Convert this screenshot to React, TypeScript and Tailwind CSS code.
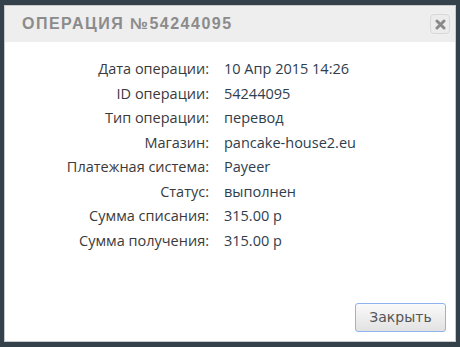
const rows: [string, string][] = [
  ["Дата операции:", "10 Апр 2015 14:26"],
  ["ID операции:", "54244095"],
  ["Тип операции:", "перевод"],
  ["Магазин:", "pancake-house2.eu"],
  ["Платежная система:", "Payeer"],
  ["Статус:", "выполнен"],
  ["Сумма списания:", "315.00 р"],
  ["Сумма получения:", "315.00 р"],
];

export default function App() {
  return (
    <div className="w-[460px] h-[347px] bg-[#34414a] pt-[5px] pl-[4px]">
      <div className="w-[452px] h-[337px] bg-white border border-[#c9c9c9] flex flex-col">
        <div className="h-[36px] bg-[#eeeeee] flex items-center justify-between pl-[17px] pr-[5px]">
          <h2 className="font-['Liberation_Sans',sans-serif] font-bold text-[16px] tracking-[1.5px] text-[#8b8b8b]">
            ОПЕРАЦИЯ №54244095
          </h2>
          <button className="w-[20px] h-[20px] rounded-[4px] border border-[#d8d8d8] bg-[#ececec] flex items-center justify-center">
            <svg width="11" height="11" viewBox="0 0 11 11">
              <path d="M2 2 L9 9 M9 2 L2 9" stroke="#8a8a8a" strokeWidth="3" strokeLinecap="round" />
            </svg>
          </button>
        </div>
        <div className="grid grid-cols-[204px_auto] gap-x-[15px] gap-y-[6px] pt-[18px] font-['Open_Sans',sans-serif] text-[14.5px] leading-[18.5px]">
          {rows.map(([label, value]) => (
            <div key={label} className="contents">
              <span className="text-right text-[#3a3a3a]">{label}</span>
              <span className="text-[#2f3d4c]">{value}</span>
            </div>
          ))}
        </div>
        <div className="flex-1 flex items-end justify-end pr-[9px] pb-[9px]">
          <button className="w-[91px] h-[29px] rounded-[3px] border border-[#8fb3ec] bg-gradient-to-b from-[#fafafa] to-[#e2e2e2] text-[#555] font-['DejaVu_Sans',sans-serif] text-[14px]">
            Закрыть
          </button>
        </div>
      </div>
    </div>
  );
}
